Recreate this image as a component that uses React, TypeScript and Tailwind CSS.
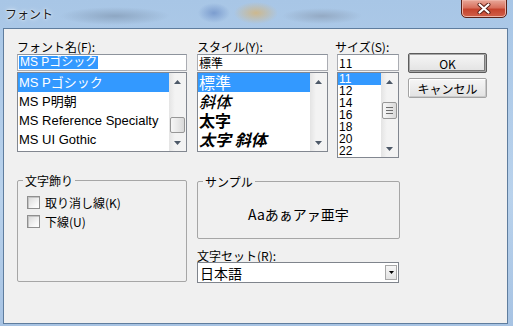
import React from 'react';

// Windows 7 style "フォント" (font picker) dialog

const jp = "font-['Noto_Sans_CJK_JP','Liberation_Sans',sans-serif]";

function Arrow({ dir }: { dir: 'up' | 'down' }) {
  return (
    <svg width="7" height="4" viewBox="0 0 7 4">
      <path d={dir === 'up' ? 'M0 4 L3.5 0 L7 4Z' : 'M0 0 L3.5 4 L7 0Z'} fill="#4d5968" />
    </svg>
  );
}

function ScrollBar({ thumb, grip }: { thumb?: string; grip?: boolean }) {
  return (
    <div className="w-[17px] h-full flex flex-col bg-[linear-gradient(90deg,#e4e4e4,#f3f3f3_35%,#f3f3f3)]">
      <div className="h-[17px] shrink-0 flex items-center justify-center">
        <Arrow dir="up" />
      </div>
      <div className="flex-1 flex flex-col">
        {thumb && (
          <div
            className={`${thumb} mx-[1px] rounded-[2px] border border-[#979797] bg-[linear-gradient(90deg,#f6f6f6,#e9e9e9_50%,#d9d9d9)] flex flex-col items-center justify-center gap-[2px]`}
          >
            {grip && (
              <>
                <div className="w-[7px] h-[1px] bg-[#6d6d6d]" />
                <div className="w-[7px] h-[1px] bg-[#6d6d6d]" />
                <div className="w-[7px] h-[1px] bg-[#6d6d6d]" />
              </>
            )}
          </div>
        )}
      </div>
      <div className="h-[17px] shrink-0 flex items-center justify-center">
        <Arrow dir="down" />
      </div>
    </div>
  );
}

function Label({ children, className = '' }: { children: React.ReactNode; className?: string }) {
  return <div className={`h-[13px] text-[12px] leading-[13px] whitespace-nowrap ${className}`}>{children}</div>;
}

function Edit({ children, className = '' }: { children: React.ReactNode; className?: string }) {
  return (
    <div
      className={`h-[17px] border border-[#abadb3] border-t-[#8d939c] bg-white px-[1px] flex items-center text-[12px] leading-[13px] ${className}`}
    >
      {children}
    </div>
  );
}

function Button({ children, isDefault, className = '' }: { children: React.ReactNode; isDefault?: boolean; className?: string }) {
  return (
    <div
      className={`h-[20px] flex items-center justify-center text-[12px] leading-[13px] rounded-[2px] bg-[linear-gradient(#f6f6f6,#ececec_50%,#e2e2e2)] ${
        isDefault
          ? 'border border-[#5c5c5c] [box-shadow:inset_0_0_0_1px_#a8a8a8,inset_-1px_-1px_0_1px_#7a7a7a]'
          : 'border border-[#a3a3a3] [box-shadow:inset_1px_1px_0_#ffffff,inset_-1px_-1px_0_#c9c9c9]'
      } ${className}`}
    >
      {children}
    </div>
  );
}

function Check({ label }: { label: string }) {
  return (
    <div className="flex items-center h-[13px]">
      <div className="w-[13px] h-[13px] border border-[#8f8f8f] bg-[linear-gradient(135deg,#d8d8d8,#f7f7f7_70%,#ffffff)] [box-shadow:inset_1px_1px_0_#c4c4c4]" />
      <span className="ml-[5px] text-[12px] leading-[13px]">{label}</span>
    </div>
  );
}

export default function App() {
  return (
    <div
      className={`w-[513px] h-[326px] overflow-hidden flex flex-col text-black ${jp} bg-[radial-gradient(55px_9px_at_115px_16px,#8ea7c3,transparent),radial-gradient(16px_10px_at_214px_13px,#7c9dcf,transparent),radial-gradient(22px_11px_at_256px_13px,#cdb88e,transparent),radial-gradient(40px_8px_at_322px_16px,#94aac4,transparent),linear-gradient(180deg,#a8c6e6,#b9d2ec_60%,#a7c3e3)]`}
    >
      {/* title bar */}
      <div className="h-[28px] shrink-0 flex items-start">
        <span className="mt-[7px] ml-[5px] text-[12px] leading-[14px] text-[#1a1a1a] [text-shadow:0_0_5px_#ffffff,0_0_2px_#ffffff]">
          フォント
        </span>
        <div className="ml-auto mr-[6px] w-[46px] h-[19px] -mt-[1px] rounded-b-[5px] border border-[#5a2219] bg-[linear-gradient(#e8a899,#d8705d_45%,#c5432d_55%,#d0604a)] [box-shadow:inset_0_0_0_1px_#eeb3a6] flex items-center justify-center">
          <svg width="14" height="11" viewBox="0 0 14 11">
            <path d="M2.5 1.5 L11.5 9.5 M11.5 1.5 L2.5 9.5" stroke="#5a1e15" strokeWidth="4" strokeLinecap="round" />
            <path d="M2.5 1.5 L11.5 9.5 M11.5 1.5 L2.5 9.5" stroke="#ffffff" strokeWidth="2.2" strokeLinecap="round" />
          </svg>
        </div>
      </div>

      {/* client area */}
      <div className="ml-[3px] w-[505px] h-[296px] shrink-0 border border-[#5f7d9e] bg-[#f0f0f0] pl-[13px] pt-[11px]">
        <div className="flex items-start">
          {/* font name */}
          <div className="w-[170px] flex flex-col">
            <Label>フォント名(F):</Label>
            <Edit className="mt-[1px]">
              <span className="bg-[#3399ff] text-white px-[1px] font-['Liberation_Sans','Noto_Sans_CJK_JP',sans-serif]">MS Pゴシック</span>
            </Edit>
            <div className="mt-[1px] h-[80px] border border-[#828790] bg-white flex">
              <div className="flex-1 flex flex-col text-[13px] leading-[16px] font-['Liberation_Sans','Noto_Sans_CJK_JP',sans-serif] whitespace-nowrap overflow-hidden">
                <div className="h-[19px] flex items-center pl-[1px] bg-[#3399ff] text-white">MS Pゴシック</div>
                <div className="h-[19px] flex items-center pl-[1px]">MS P明朝</div>
                <div className="h-[19px] flex items-center pl-[1px]">MS Reference Specialty</div>
                <div className="h-[19px] flex items-center pl-[1px]">MS UI Gothic</div>
              </div>
              <ScrollBar thumb="mt-[27px] h-[16px]" />
            </div>
          </div>

          {/* style */}
          <div className="ml-[10px] w-[131px] flex flex-col">
            <Label>スタイル(Y):</Label>
            <Edit className="mt-[1px]">標準</Edit>
            <div className="mt-[1px] h-[80px] border border-[#828790] bg-white flex">
              <div className="flex-1 flex flex-col text-[16px] leading-[17px] whitespace-nowrap overflow-hidden">
                <div className="h-[19px] flex items-center pl-[1px] bg-[#3399ff] text-white">標準</div>
                <div className="h-[19px] flex items-center pl-[1px] italic font-medium">斜体</div>
                <div className="h-[19px] flex items-center pl-[1px] font-bold">太字</div>
                <div className="h-[19px] flex items-center pl-[1px] italic font-bold">太字 斜体</div>
              </div>
              <ScrollBar />
            </div>
          </div>

          {/* size */}
          <div className="ml-[7px] w-[64px] flex flex-col">
            <Label>サイズ(S):</Label>
            <Edit className="mt-[1px] ml-[2px] w-[62px]">11</Edit>
            <div className="mt-[1px] ml-[2px] w-[62px] h-[86px] border border-[#828790] bg-white flex">
              <div className="flex-1 flex flex-col text-[12px] leading-[12px] font-['Liberation_Sans_Narrow','Liberation_Sans',sans-serif] overflow-hidden">
                <div className="h-[12px] pl-[1px] bg-[#3399ff] text-white">11</div>
                <div className="h-[12px] pl-[1px]">12</div>
                <div className="h-[12px] pl-[1px]">14</div>
                <div className="h-[12px] pl-[1px]">16</div>
                <div className="h-[12px] pl-[1px]">18</div>
                <div className="h-[12px] pl-[1px]">20</div>
                <div className="h-[12px] pl-[1px]">22</div>
              </div>
              <ScrollBar thumb="mt-[12px] h-[17px]" grip />
            </div>
          </div>

          {/* buttons */}
          <div className="ml-[9px] w-[79px] flex flex-col">
            <Button isDefault className="mt-[13px]">OK</Button>
            <Button className="mt-[5px]">キャンセル</Button>
          </div>
        </div>

        <div className="flex items-start mt-[16px]">
          <fieldset className="w-[170px] h-[108px] border border-[#a6a6a6] rounded-[2px]">
            <legend className="ml-[5px] px-[2px] text-[12px] leading-[13px]">文字飾り</legend>
            <div className="pl-[9px] pt-[9px] flex flex-col gap-[6px]">
              <Check label="取り消し線(K)" />
              <Check label="下線(U)" />
            </div>
          </fieldset>

          <div className="ml-[10px] w-[203px] flex flex-col">
            <fieldset className="mt-[1px] h-[64px] border border-[#a6a6a6] rounded-[2px]">
              <legend className="ml-[5px] px-[2px] text-[12px] leading-[13px]">サンプル</legend>
              <div className="h-[48px] pt-[4px] flex items-center justify-center text-[14px] leading-[18px]">
                Aaあぁアァ亜宇
              </div>
            </fieldset>
            <Label className="mt-[10px]">文字セット(R):</Label>
            <div className="w-[202px] h-[21px] border border-[#7f848c] bg-white flex items-center pl-[2px] text-[14px] leading-[16px]">
              日本語
              <div className="ml-auto mr-[1px] w-[12px] h-[15px] border border-[#a8a8a8] bg-[linear-gradient(#f6f6f6,#e3e3e3)] flex items-center justify-center">
                <svg width="5" height="3" viewBox="0 0 5 3">
                  <path d="M0 0 L2.5 3 L5 0Z" fill="#000000" />
                </svg>
              </div>
            </div>
          </div>
        </div>
      </div>
    </div>
  );
}
